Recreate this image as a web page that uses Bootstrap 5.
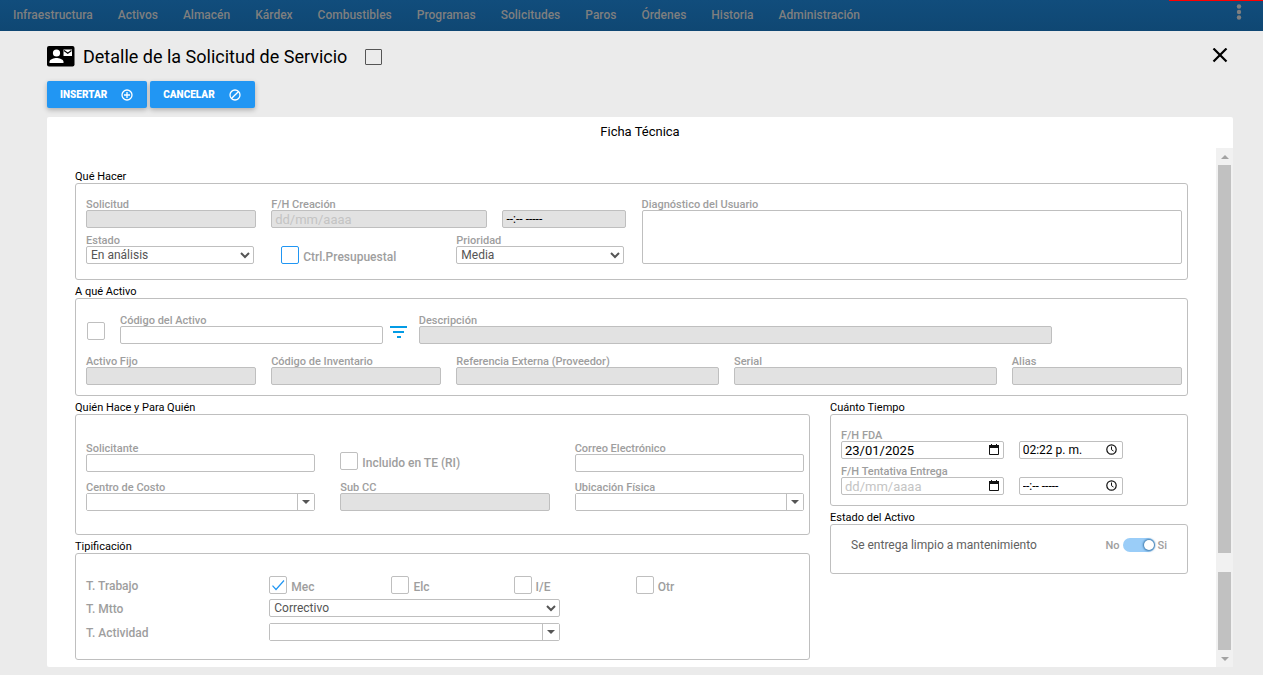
<!DOCTYPE html>
<html lang="es">
<head>
<meta charset="utf-8">
<meta name="viewport" content="width=device-width, initial-scale=1">
<title>Detalle de la Solicitud de Servicio</title>
<link href="https://cdn.jsdelivr.net/npm/bootstrap@5.3.0/dist/css/bootstrap.min.css" rel="stylesheet">
<style>
  :root { --line: #bfbfbf; --muted: #9e9e9e; --accent: #2196f3; }
  body { background: #ebebeb; font-family: Roboto, "Liberation Sans", sans-serif; font-size: 12px; line-height: 14px; color: #000; }

  /* Top menu */
  .topbar { background: linear-gradient(#114d7c, #0f4773); height: 31px; }
  .topbar .navbar-nav .nav-link { color: #7f7f7f; font-weight: 500; font-size: 12px; line-height: 14px; padding: 8px 12px 9px 13px; }
  .load-line { position: absolute; top: 0; right: 0; width: 94px; height: 1px; background: #f00; }
  .more-btn { color: #7f7f7f; line-height: 0; }

  /* Heading and actions */
  .page-main { padding: 15px 30px 8px 47px; }
  .page-title { font-size: 18px; line-height: 22px; font-weight: 400; }
  .actions { gap: 3px; margin: 13px 0 9px; }
  .action-btn { background: var(--accent); color: #fff; font-size: 10px; line-height: 13px; font-weight: 900; border: 0; border-radius: 2px; padding: 7px 14px 7px 13px; gap: 14px; box-shadow: 0 2px 5px rgba(0,0,0,.26); }
  .action-btn:hover { background: #1e88e5; color: #fff; }

  /* Sheet */
  .sheet { background: #fff; border-radius: 2px; }
  .sheet-tab { font-size: 13px; line-height: 14px; padding: 8px 0 9px; }
  .sheet-body { padding: 17px 28px 6px 28px; }
  .group-title { font-size: 11px; line-height: 12px; padding-top: 6px; margin: 0; float: none; }
  .group-box { border: 1px solid var(--line); border-radius: 3px; }
  .side-left { padding-right: 7px; }
  .side-right { padding-left: 13px; }

  /* Form controls */
  .cell { padding: 0 5px 0 10px; }
  .cell-inset { padding: 0 15px 0 20px; }
  .cap { display: block; height: 12px; padding-top: 1px; color: var(--muted); font-weight: 500; font-size: 11px; line-height: 12px; white-space: nowrap; }
  .opt { color: var(--muted); font-weight: 500; font-size: 12px; line-height: 14px; white-space: nowrap; }
  .row-name { padding-top: 2px; }
  .field { display: block; width: 100%; min-width: 0; height: 18px; border: 1px solid var(--line); border-radius: 2px; background: #fff; color: #000; font-size: 12px; line-height: 14px; padding: 0 3px; }
  .field:disabled { background: #e2e2e2; opacity: 1; }
  .field::placeholder { color: #c4c4c4; opacity: 1; }
  .field.roomy { font-size: 13px; }
  .dashes::placeholder { color: #000; font-size: 12px; }
  textarea.field { resize: none; height: 54px; }
  select.field { color: #555; padding: 0; }
  .select-cell { padding-right: 7px; }
  .tick { appearance: none; flex: none; width: 18px; height: 18px; margin: 0; border: 1px solid var(--line); border-radius: 2px; background: #fff; }
  .tick:checked { background: #fff url("data:image/svg+xml,%3Csvg xmlns='http://www.w3.org/2000/svg' viewBox='0 0 16 16'%3E%3Cpath d='M2.500 8.700 6 12.500 14 3.500' fill='none' stroke='%232196f3' stroke-width='1.200'/%3E%3C/svg%3E") center / 16px no-repeat; }
  .tick-accent { border-color: var(--accent); }
  .tick-title { width: 17px; height: 16px; margin-left: 18px; border-color: #555; border-radius: 1px; background: transparent; }
  .combo { border: 1px solid var(--line); border-radius: 2px; height: 18px; }
  .combo input { border: 0; min-width: 0; padding: 0 3px; font-size: 12px; }
  .combo button { flex: none; width: 17px; border: 0; border-left: 1px solid var(--line); background: #fff; padding: 0; line-height: 0; }
  .picker { position: relative; }
  .picker svg { position: absolute; right: 5px; top: 3px; pointer-events: none; }
  .time-wide { flex: none; width: 124px; }
  .time-slim { flex: none; width: 104px; }
  .slide { appearance: none; position: relative; width: 32px; height: 14px; border-radius: 7px; background: #9acdf8; margin: 0 3px; }
  .slide::after { content: ""; position: absolute; right: 1px; top: 2px; width: 10px; height: 10px; border-radius: 50%; background: #fff; box-shadow: 0 0 2px 1px #3b78ab; }

  /* Vertical scroll rail */
  .rail { width: 17px; background: #f1f1f1; }
  .rail-arrow { height: 17px; }
  .rail-up::after, .rail-down::after { content: ""; border: 4px solid transparent; }
  .rail-up::after { border-top: 0; border-bottom-color: #a3a3a3; }
  .rail-down::after { border-bottom: 0; border-top-color: #a3a3a3; }
  .rail-thumb { background: #c1c1c1; margin: 0 2px; }
  .rail-thumb.first { flex: 388 0 0; }
  .rail-thumb.second { flex: 78 0 0; }
</style>
</head>
<body class="min-vh-100 d-flex flex-column">

<nav class="topbar navbar navbar-expand p-0 position-relative align-items-start" aria-label="Menú principal">
  <ul class="navbar-nav flex-grow-1">
    <li class="nav-item"><a class="nav-link" href="#">Infraestructura</a></li>
    <li class="nav-item"><a class="nav-link" href="#">Activos</a></li>
    <li class="nav-item"><a class="nav-link" href="#">Almacén</a></li>
    <li class="nav-item"><a class="nav-link" href="#">Kárdex</a></li>
    <li class="nav-item"><a class="nav-link" href="#">Combustibles</a></li>
    <li class="nav-item"><a class="nav-link" href="#">Programas</a></li>
    <li class="nav-item"><a class="nav-link" href="#">Solicitudes</a></li>
    <li class="nav-item"><a class="nav-link" href="#">Paros</a></li>
    <li class="nav-item"><a class="nav-link" href="#">Órdenes</a></li>
    <li class="nav-item"><a class="nav-link" href="#">Historia</a></li>
    <li class="nav-item"><a class="nav-link" href="#">Administración</a></li>
  </ul>
  <button type="button" class="more-btn btn border-0 p-0 me-3 mt-1" aria-label="Más opciones">
    <svg width="16" height="16" viewBox="0 0 16 16" fill="currentColor"><circle cx="8" cy="2.5" r="2.2"/><circle cx="8" cy="8" r="2.2"/><circle cx="8" cy="13.5" r="2.2"/></svg>
  </button>
  <span class="load-line"></span>
</nav>

<main class="page-main flex-grow-1 d-flex flex-column">
  <header class="d-flex align-items-center">
    <svg width="28" height="22" viewBox="0 0 28 22" aria-hidden="true"><rect width="27.5" height="20.5" rx="2" fill="#000"/><circle cx="9.500" cy="7" r="3.600" fill="#fff"/><path d="M2.500 17v-1.200c0-2.600 4.700-3.800 7-3.800s7 1.200 7 3.800v1.200z" fill="#fff"/><path d="M16.500 3.500h8.500v6.500h-8.500z" fill="#fff"/><path d="m17 4.500 3.750 2.700L24.500 4.500" fill="none" stroke="#000" stroke-width="1.200"/></svg>
    <h1 class="page-title mb-0 ms-2">Detalle de la Solicitud de Servicio</h1>
    <input type="checkbox" class="tick tick-title" aria-label="Seleccionar solicitud">
    <button type="button" class="btn border-0 p-0 ms-auto me-1 lh-1" aria-label="Cerrar">
      <svg class="d-block" width="20" height="18" viewBox="0 0 20 18"><path d="m4.500 .5 13 13M17.500 .5l-13 13" stroke="#000" stroke-width="2.200" fill="none"/></svg>
    </button>
  </header>

  <div class="actions d-flex">
    <button type="button" class="btn action-btn d-flex align-items-center">INSERTAR
      <svg width="12" height="12" viewBox="0 0 12 12" fill="none" stroke="#fff" stroke-width="1.300"><circle cx="6" cy="6" r="5"/><path d="M6 3v6M3 6h6"/></svg>
    </button>
    <button type="button" class="btn action-btn d-flex align-items-center">CANCELAR
      <svg width="12" height="12" viewBox="0 0 12 12" fill="none" stroke="#fff" stroke-width="1.300"><circle cx="6" cy="6" r="5"/><path d="m2.700 9.300 6.600-6.600"/></svg>
    </button>
  </div>

  <section class="sheet flex-grow-1 d-flex flex-column">
    <h2 class="sheet-tab text-center mb-0 fw-normal">Ficha Técnica</h2>
    <div class="d-flex flex-grow-1">
      <form class="sheet-body flex-grow-1">

        <fieldset>
          <legend class="group-title">Qué Hacer</legend>
          <div class="group-box row g-0" style="padding:14px 0 15px">
            <div class="col-6">
              <div class="row g-0">
                <div class="col-4 cell">
                  <label class="cap" for="solicitud">Solicitud</label>
                  <input class="field" id="solicitud" type="text" disabled>
                </div>
                <div class="col-8 cell">
                  <label class="cap" for="creacion">F/H Creación</label>
                  <div class="d-flex" style="gap:15px">
                    <input class="field roomy" id="creacion" type="text" placeholder="dd/mm/aaaa" disabled>
                    <div class="time-wide"><input class="field dashes" type="text" placeholder="--:-- -----" aria-label="Hora de creación" disabled></div>
                  </div>
                </div>
              </div>
              <div class="row g-0" style="margin-top:6px">
                <div class="col-4 cell select-cell">
                  <label class="cap" for="estado">Estado</label>
                  <select class="field" id="estado"><option>En análisis</option></select>
                </div>
                <div class="col-4 cell-inset d-flex align-items-end gap-1">
                  <input type="checkbox" class="tick tick-accent" id="presup">
                  <label class="opt" for="presup">Ctrl.Presupuestal</label>
                </div>
                <div class="col-4 cell select-cell">
                  <label class="cap" for="prioridad">Prioridad</label>
                  <select class="field" id="prioridad"><option>Media</option></select>
                </div>
              </div>
            </div>
            <div class="col-6 cell">
              <label class="cap" for="diag">Diagnóstico del Usuario</label>
              <textarea class="field" id="diag"></textarea>
            </div>
          </div>
        </fieldset>

        <fieldset>
          <legend class="group-title">A qué Activo</legend>
          <div class="group-box" style="padding:15px 0 10px">
            <div class="d-flex">
              <div style="width:34px;padding:8px 0 0 11px"><input type="checkbox" class="tick d-block" aria-label="Seleccionar activo"></div>
              <div class="col-3 cell">
                <label class="cap" for="codigo">Código del Activo</label>
                <input class="field" id="codigo" type="text">
              </div>
              <button type="button" class="btn border-0 p-0 lh-1 d-flex align-items-end" style="width:21px" aria-label="Filtrar activos">
                <svg width="20" height="18" viewBox="0 0 20 18" fill="#039be5"><path d="M2 0h17v2H2zM5 5h11v2H5zM9 10h4v2H9z"/></svg>
              </button>
              <div class="col-7 cell">
                <label class="cap" for="descripcion">Descripción</label>
                <input class="field" id="descripcion" type="text" disabled>
              </div>
            </div>
            <div class="row g-0" style="margin-top:11px">
              <div class="col-2 cell"><label class="cap" for="fijo">Activo Fijo</label><input class="field" id="fijo" type="text" disabled></div>
              <div class="col-2 cell"><label class="cap" for="inventario">Código de Inventario</label><input class="field" id="inventario" type="text" disabled></div>
              <div class="col-3 cell"><label class="cap" for="referencia">Referencia Externa (Proveedor)</label><input class="field" id="referencia" type="text" disabled></div>
              <div class="col-3 cell"><label class="cap" for="serial">Serial</label><input class="field" id="serial" type="text" disabled></div>
              <div class="col-2 cell"><label class="cap" for="alias">Alias</label><input class="field" id="alias" type="text" disabled></div>
            </div>
          </div>
        </fieldset>

        <div class="row g-0">
          <div class="col-8 side-left">
            <fieldset>
              <legend class="group-title">Quién Hace y Para Quién</legend>
              <div class="group-box" style="padding:27px 0 23px">
                <div class="row g-0">
                  <div class="col-4 cell"><label class="cap" for="solicitante">Solicitante</label><input class="field" id="solicitante" type="text"></div>
                  <div class="col-4 cell-inset d-flex align-items-center gap-1" style="padding-top:8px">
                    <input type="checkbox" class="tick" id="te"><label class="opt pt-1" for="te">Incluido en TE (RI)</label>
                  </div>
                  <div class="col-4 cell"><label class="cap" for="correo">Correo Electrónico</label><input class="field" id="correo" type="email"></div>
                </div>
                <div class="row g-0" style="margin-top:9px">
                  <div class="col-4 cell">
                    <label class="cap" for="costo">Centro de Costo</label>
                    <div class="combo d-flex"><input class="flex-grow-1" id="costo" type="text"><button type="button" aria-label="Ver centros de costo"><svg width="8" height="4" viewBox="0 0 8 4"><path d="M0 0h8L4 4z" fill="#555"/></svg></button></div>
                  </div>
                  <div class="col-4 cell-inset"><label class="cap" for="subcc">Sub CC</label><input class="field" id="subcc" type="text" disabled></div>
                  <div class="col-4 cell">
                    <label class="cap" for="ubicacion">Ubicación Física</label>
                    <div class="combo d-flex"><input class="flex-grow-1" id="ubicacion" type="text"><button type="button" aria-label="Ver ubicaciones"><svg width="8" height="4" viewBox="0 0 8 4"><path d="M0 0h8L4 4z" fill="#555"/></svg></button></div>
                  </div>
                </div>
              </div>
            </fieldset>

            <fieldset>
              <legend class="group-title">Tipificación</legend>
              <div class="group-box" style="padding:22px 0 18px">
                <div class="row g-0 align-items-center">
                  <div class="col-3 cell opt row-name">T. Trabajo</div>
                  <div class="col-2 cell d-flex align-items-end gap-1"><input type="checkbox" class="tick" id="mec" checked><label class="opt" for="mec">Mec</label></div>
                  <div class="col-2 cell d-flex align-items-end gap-1"><input type="checkbox" class="tick" id="elc"><label class="opt" for="elc">Elc</label></div>
                  <div class="col-2 cell d-flex align-items-end gap-1"><input type="checkbox" class="tick" id="ie"><label class="opt" for="ie">I/E</label></div>
                  <div class="col-2 cell d-flex align-items-end gap-1"><input type="checkbox" class="tick" id="otr"><label class="opt" for="otr">Otr</label></div>
                </div>
                <div class="row g-0 align-items-center" style="margin-top:5px">
                  <label class="col-3 cell opt row-name" for="mtto">T. Mtto</label>
                  <div class="col-5 cell"><select class="field" id="mtto"><option>Correctivo</option></select></div>
                </div>
                <div class="row g-0 align-items-center" style="margin-top:6px">
                  <label class="col-3 cell opt row-name" for="actividad">T. Actividad</label>
                  <div class="col-5 cell">
                    <div class="combo d-flex"><input class="flex-grow-1" id="actividad" type="text"><button type="button" aria-label="Ver actividades"><svg width="8" height="4" viewBox="0 0 8 4"><path d="M0 0h8L4 4z" fill="#555"/></svg></button></div>
                  </div>
                </div>
              </div>
            </fieldset>
          </div>

          <div class="col-4 side-right">
            <fieldset>
              <legend class="group-title">Cuánto Tiempo</legend>
              <div class="group-box" style="padding:14px 0 10px">
                <div class="col-10 cell">
                  <label class="cap" for="fda">F/H FDA</label>
                  <div class="d-flex" style="gap:15px">
                    <div class="picker flex-grow-1"><input class="field roomy" id="fda" type="text" value="23/01/2025"><svg width="10" height="11" viewBox="0 0 10 11"><path d="M.5 1.500h9v9h-9z" fill="none" stroke="#111"/><path d="M0 1h10v3H0zM2 0h1v1H2zM7 0h1v1H7z" fill="#111"/></svg></div>
                    <div class="picker time-slim"><input class="field" type="text" value="02:22 p. m." aria-label="Hora FDA"><svg style="right:6px" width="11" height="11" viewBox="0 0 11 11" fill="none" stroke="#111"><circle cx="5.500" cy="5.500" r="4.700" stroke-width="1.200"/><path d="M5.500 2.500v3.200L7.500 7"/></svg></div>
                  </div>
                </div>
                <div class="col-10 cell" style="margin-top:6px">
                  <label class="cap" for="entrega">F/H Tentativa Entrega</label>
                  <div class="d-flex" style="gap:15px">
                    <div class="picker flex-grow-1"><input class="field roomy" id="entrega" type="text" placeholder="dd/mm/aaaa"><svg width="10" height="11" viewBox="0 0 10 11"><path d="M.5 1.500h9v9h-9z" fill="none" stroke="#111"/><path d="M0 1h10v3H0zM2 0h1v1H2zM7 0h1v1H7z" fill="#111"/></svg></div>
                    <div class="picker time-slim"><input class="field dashes" type="text" placeholder="--:-- -----" aria-label="Hora de entrega"><svg style="right:6px" width="11" height="11" viewBox="0 0 11 11" fill="none" stroke="#111"><circle cx="5.500" cy="5.500" r="4.700" stroke-width="1.200"/><path d="M5.500 2.500v3.200L7.500 7"/></svg></div>
                  </div>
                </div>
              </div>
            </fieldset>

            <fieldset>
              <legend class="group-title">Estado del Activo</legend>
              <div class="group-box d-flex align-items-center" style="padding:13px 20px 21px">
                <label for="limpio" class="me-auto" style="color:#616161">Se entrega limpio a mantenimiento</label>
                <span class="cap">No</span>
                <input type="checkbox" role="switch" class="slide" id="limpio" checked>
                <span class="cap">Si</span>
              </div>
            </fieldset>
          </div>
        </div>
      </form>

      <div class="rail d-flex flex-column" aria-hidden="true">
        <div class="rail-arrow rail-up d-flex align-items-center justify-content-center"></div>
        <div class="rail-thumb first"></div>
        <div style="height:19px"></div>
        <div class="rail-thumb second"></div>
        <div class="rail-arrow rail-down d-flex align-items-center justify-content-center"></div>
      </div>
    </div>
  </section>
</main>

<script src="https://cdn.jsdelivr.net/npm/bootstrap@5.3.0/dist/js/bootstrap.bundle.min.js"></script>
</body>
</html>
